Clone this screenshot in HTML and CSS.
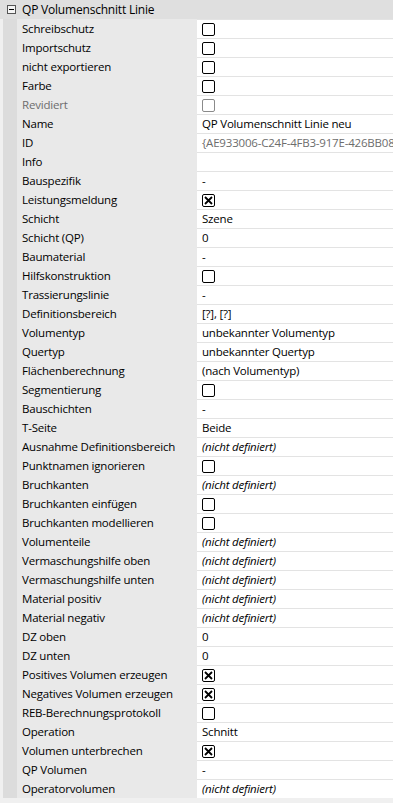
FILE: index.html
```html
<!DOCTYPE html>
<html lang="de">
<head>
  <meta charset="UTF-8" />
  <meta name="viewport" content="width=device-width, initial-scale=1" />
  <title>Eigenschaften</title>
  <link rel="stylesheet" href="styles.css">
</head>
<body>
  <div class="grid">
    <div class="category">
      <span class="toggle"></span>
      <span class="cat-title">QP Volumenschnitt Linie</span>
    </div>
    <div id="rows"></div>
  </div>

  <script>
    // type: c = checkbox, x = checked, t = text, i = italic, g = grey text
    const props = [
      ["Schreibschutz", "c"],
      ["Importschutz", "c"],
      ["nicht exportieren", "c"],
      ["Farbe", "c"],
      ["Revidiert", "c", "", true],
      ["Name", "t", "QP Volumenschnitt Linie neu"],
      ["ID", "g", "{AE933006-C24F-4FB3-917E-426BB08A2C51}"],
      ["Info", "t", ""],
      ["Bauspezifik", "t", "-"],
      ["Leistungsmeldung", "x"],
      ["Schicht", "t", "Szene"],
      ["Schicht (QP)", "t", "0"],
      ["Baumaterial", "t", "-"],
      ["Hilfskonstruktion", "c"],
      ["Trassierungslinie", "t", "-"],
      ["Definitionsbereich", "t", "[?], [?]"],
      ["Volumentyp", "t", "unbekannter Volumentyp"],
      ["Quertyp", "t", "unbekannter Quertyp"],
      ["Flächenberechnung", "t", "(nach Volumentyp)"],
      ["Segmentierung", "c"],
      ["Bauschichten", "t", "-"],
      ["T-Seite", "t", "Beide"],
      ["Ausnahme Definitionsbereich", "i", "(nicht definiert)"],
      ["Punktnamen ignorieren", "c"],
      ["Bruchkanten", "i", "(nicht definiert)"],
      ["Bruchkanten einfügen", "c"],
      ["Bruchkanten modellieren", "c"],
      ["Volumenteile", "i", "(nicht definiert)"],
      ["Vermaschungshilfe oben", "i", "(nicht definiert)"],
      ["Vermaschungshilfe unten", "i", "(nicht definiert)"],
      ["Material positiv", "i", "(nicht definiert)"],
      ["Material negativ", "i", "(nicht definiert)"],
      ["DZ oben", "t", "0"],
      ["DZ unten", "t", "0"],
      ["Positives Volumen erzeugen", "x"],
      ["Negatives Volumen erzeugen", "x"],
      ["REB-Berechnungsprotokoll", "c"],
      ["Operation", "t", "Schnitt"],
      ["Volumen unterbrechen", "x"],
      ["QP Volumen", "t", "-"],
      ["Operatorvolumen", "i", "(nicht definiert)"]
    ];

    const rows = document.getElementById("rows");

    props.forEach(([label, type, text, disabled]) => {
      const row = document.createElement("div");
      row.className = "row" + (disabled ? " disabled" : "");

      const gutter = document.createElement("div");
      gutter.className = "gutter";
      row.appendChild(gutter);

      const name = document.createElement("div");
      name.className = "label";
      name.textContent = label;
      row.appendChild(name);

      const value = document.createElement("div");
      value.className = "value";
      if (type === "c" || type === "x") {
        const box = document.createElement("span");
        box.className = "check" + (type === "x" ? " checked" : "");
        if (type === "x") {
          box.innerHTML = '<svg width="11" height="11" viewBox="0 0 11 11"><path d="M2 2 L9 9 M9 2 L2 9" stroke="#000" stroke-width="1.8"/></svg>';
        }
        value.appendChild(box);
      } else {
        const span = document.createElement("span");
        span.textContent = text;
        if (type === "i") span.className = "italic";
        if (type === "g") span.className = "grey";
        value.appendChild(span);
      }
      row.appendChild(value);

      rows.appendChild(row);
    });
  </script>
</body>
</html>
```

FILE: styles.css
```css
body {
  margin: 0;
  background: #f0f0f0;
  font-family: "Open Sans", "Liberation Sans", sans-serif;
  font-size: 11.5px;
  letter-spacing: -0.2px;
  color: #000;
  overflow: hidden;
}
.grid {
  width: 393px;
}
.category {
  display: flex;
  align-items: center;
  height: 19px;
  background: #dfdfdf;
}
.toggle {
  box-sizing: border-box;
  width: 9px;
  height: 9px;
  margin-left: 7px;
  border: 1px solid #555;
  background: #f4f4f4;
  position: relative;
}
.toggle::after {
  content: "";
  position: absolute;
  left: 1px;
  top: 3px;
  width: 5px;
  height: 1px;
  background: #000;
}
.cat-title {
  margin-left: 6px;
  font-size: 12px;
  white-space: nowrap;
}
.row {
  display: flex;
  height: 19px;
  margin-left: 3px;
}
.gutter {
  width: 14px;
  background: #dcdcdc;
}
.label {
  width: 175px;
  padding-left: 5px;
  background: #e9e9e9;
  line-height: 19px;
  white-space: nowrap;
  overflow: hidden;
}
.value {
  flex: 1;
  min-width: 0;
  box-sizing: border-box;
  padding-left: 5px;
  border-top: 1px solid #e3e3e3;
  background: #fff;
  line-height: 18px;
  white-space: nowrap;
  overflow: hidden;
  display: flex;
  align-items: center;
}
.italic {
  font-style: italic;
}
.grey {
  color: #6d6d6d;
}
.check {
  box-sizing: border-box;
  width: 13px;
  height: 13px;
  border: 1px solid #000;
  border-radius: 2px;
  background: #fff;
  display: flex;
  align-items: center;
  justify-content: center;
}
.disabled .label {
  color: #6d6d6d;
}
.disabled .check {
  border-color: #8a8a8a;
}
```
